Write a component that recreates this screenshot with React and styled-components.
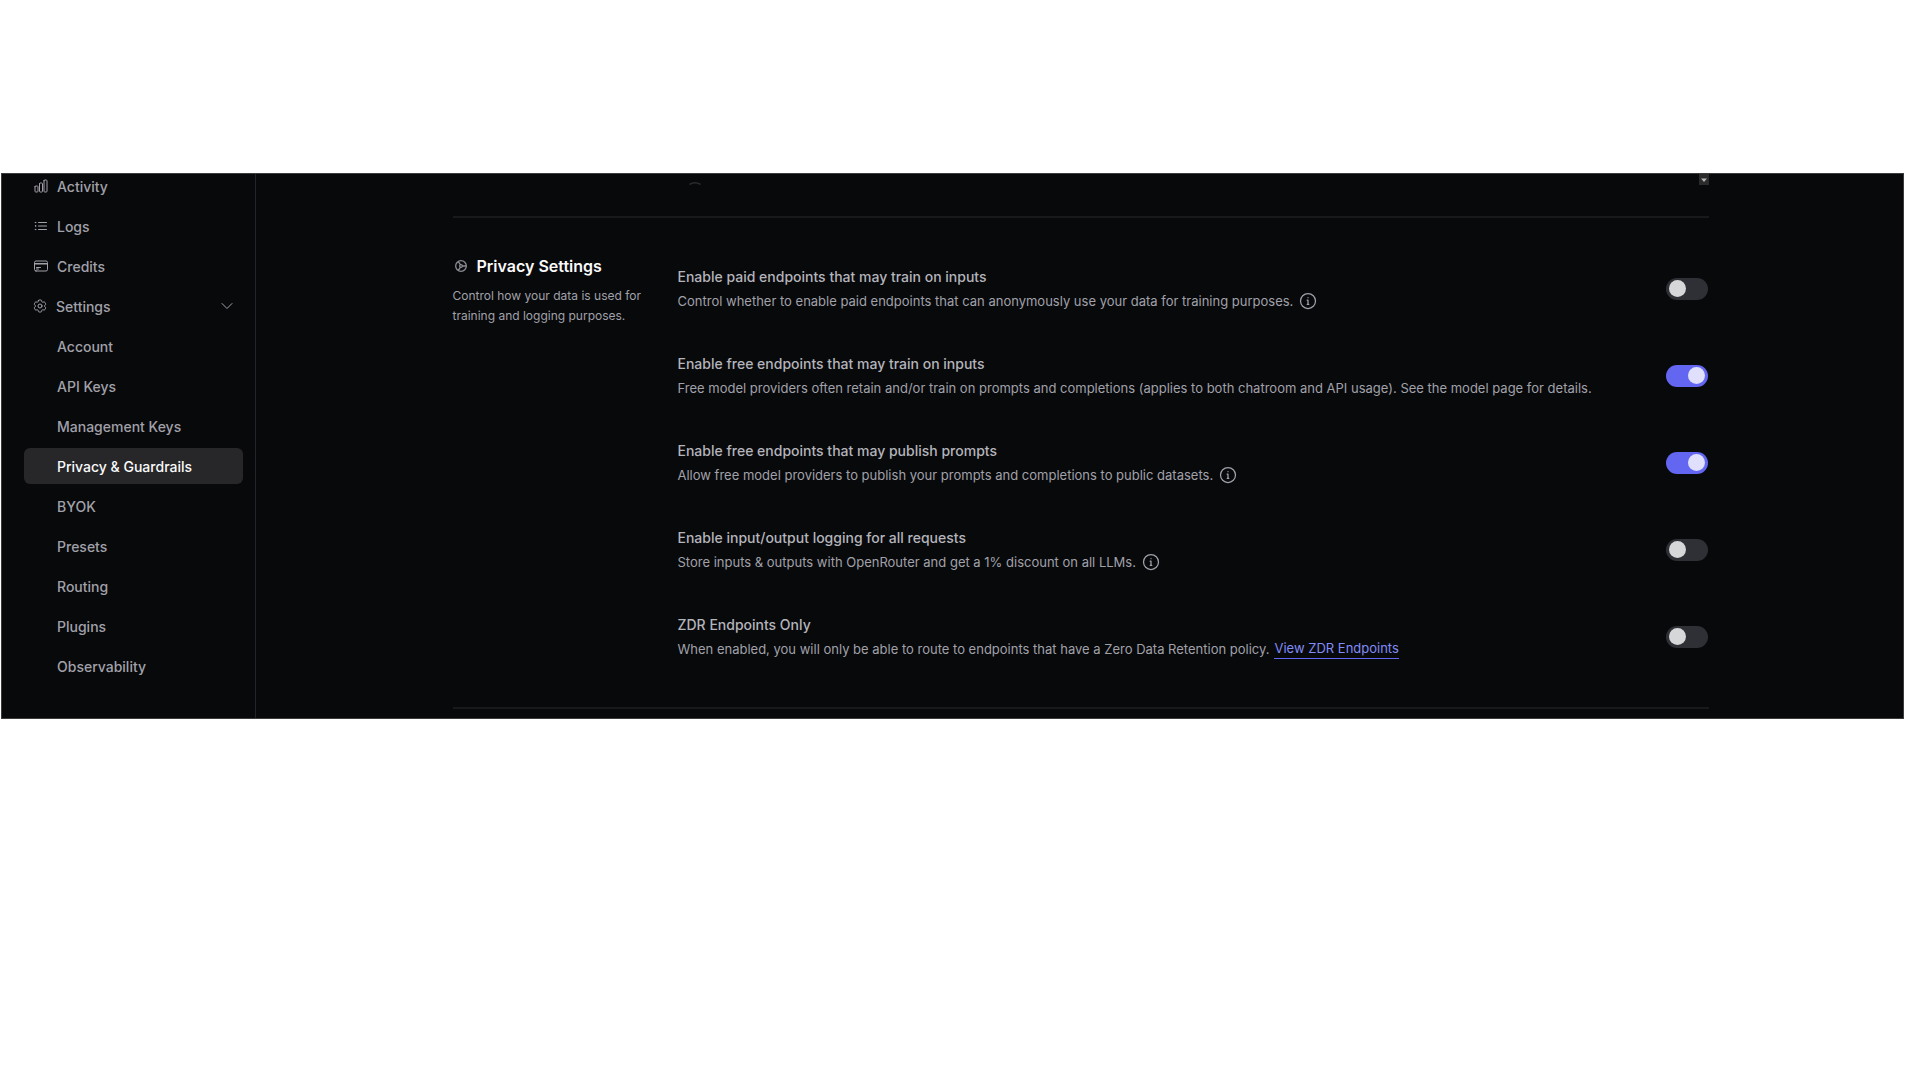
import React, { useState } from 'react'
import styled, { createGlobalStyle } from 'styled-components'

const mainLinks = [
  { label: 'Activity', icon: 'activity' },
  { label: 'Logs', icon: 'logs' },
  { label: 'Credits', icon: 'credits' },
]

const settingsLinks = [
  'Account',
  'API Keys',
  'Management Keys',
  'Privacy & Guardrails',
  'BYOK',
  'Presets',
  'Routing',
  'Plugins',
  'Observability',
]

const options = [
  {
    id: 'paid-train',
    title: 'Enable paid endpoints that may train on inputs',
    text: 'Control whether to enable paid endpoints that can anonymously use your data for training purposes.',
    info: true,
    on: false,
  },
  {
    id: 'free-train',
    title: 'Enable free endpoints that may train on inputs',
    text: 'Free model providers often retain and/or train on prompts and completions (applies to both chatroom and API usage). See the model page for details.',
    on: true,
  },
  {
    id: 'free-publish',
    title: 'Enable free endpoints that may publish prompts',
    text: 'Allow free model providers to publish your prompts and completions to public datasets.',
    info: true,
    on: true,
  },
  {
    id: 'io-logging',
    title: 'Enable input/output logging for all requests',
    text: 'Store inputs & outputs with OpenRouter and get a 1% discount on all LLMs.',
    info: true,
    on: false,
  },
  {
    id: 'zdr-only',
    title: 'ZDR Endpoints Only',
    text: 'When enabled, you will only be able to route to endpoints that have a Zero Data Retention policy.',
    link: 'View ZDR Endpoints',
    on: false,
  },
]

// heroicons outline shapes
const paths = {
  activity:
    'M3 13.125C3 12.504 3.504 12 4.125 12h2.25c.621 0 1.125.504 1.125 1.125v6.75C7.5 20.496 6.996 21 6.375 21h-2.25A1.125 1.125 0 0 1 3 19.875v-6.75ZM9.75 8.625c0-.621.504-1.125 1.125-1.125h2.25c.621 0 1.125.504 1.125 1.125v11.25c0 .621-.504 1.125-1.125 1.125h-2.25a1.125 1.125 0 0 1-1.125-1.125V8.625ZM16.5 4.125c0-.621.504-1.125 1.125-1.125h2.25C20.496 3 21 3.504 21 4.125v15.75c0 .621-.504 1.125-1.125 1.125h-2.25a1.125 1.125 0 0 1-1.125-1.125V4.125Z',
  logs: 'M8.25 6.75h12M8.25 12h12m-12 5.25h12M3.75 6.75h.007v.008H3.75V6.75Zm.375 0a.375.375 0 1 1-.75 0 .375.375 0 0 1 .75 0ZM3.75 12h.007v.008H3.75V12Zm.375 0a.375.375 0 1 1-.75 0 .375.375 0 0 1 .75 0Zm-.375 5.25h.007v.008H3.75v-.008Zm.375 0a.375.375 0 1 1-.75 0 .375.375 0 0 1 .75 0Z',
  credits:
    'M2.25 8.25h19.5M2.25 9h19.5m-16.5 5.25h6m-6 2.25h3m-3.75 3h15a2.25 2.25 0 0 0 2.25-2.25V6.75A2.25 2.25 0 0 0 19.5 4.5h-15a2.25 2.25 0 0 0-2.25 2.25v10.5A2.25 2.25 0 0 0 4.5 19.5Z',
  settings:
    'M9.594 3.94c.09-.542.56-.94 1.11-.94h2.593c.55 0 1.02.398 1.11.94l.213 1.281c.063.374.313.686.645.87.074.04.147.083.22.127.325.196.72.257 1.075.124l1.217-.456a1.125 1.125 0 0 1 1.37.49l1.296 2.247a1.125 1.125 0 0 1-.26 1.431l-1.003.827c-.293.241-.438.613-.43.992a7.723 7.723 0 0 1 0 .255c-.008.378.137.75.43.991l1.004.827c.424.35.534.955.26 1.43l-1.298 2.247a1.125 1.125 0 0 1-1.369.491l-1.217-.456c-.355-.133-.75-.072-1.076.124a6.47 6.47 0 0 1-.22.128c-.331.183-.581.495-.644.869l-.213 1.281c-.09.543-.56.94-1.11.94h-2.594c-.55 0-1.019-.398-1.11-.94l-.213-1.281c-.062-.374-.312-.686-.644-.87a6.52 6.52 0 0 1-.22-.127c-.325-.196-.72-.257-1.076-.124l-1.217.456a1.125 1.125 0 0 1-1.369-.49l-1.297-2.247a1.125 1.125 0 0 1 .26-1.431l1.004-.827c.292-.24.437-.613.43-.991a6.932 6.932 0 0 1 0-.255c.007-.38-.138-.751-.43-.992l-1.004-.827a1.125 1.125 0 0 1-.26-1.43l1.297-2.247a1.125 1.125 0 0 1 1.37-.491l1.216.456c.356.133.751.072 1.076-.124.072-.044.146-.086.22-.128.332-.183.582-.495.644-.869l.214-1.28ZM15 12a3 3 0 1 1-6 0 3 3 0 0 1 6 0Z',
  chevron: 'm19.5 8.25-7.5 7.5-7.5-7.5',
  wheel:
    'M20 12a8 8 0 1 1-16 0 8 8 0 0 1 16 0ZM14 12a2 2 0 1 1-4 0 2 2 0 0 1 4 0ZM14 12h6M11 10 8 5.500M11 14l-3 4.500',
  info: 'M21 12a9 9 0 1 1-18 0 9 9 0 0 1 18 0ZM11 11h1v5m-1 0h2M12 8h.01',
}

const Icon = ({ name, size = 16, stroke = 1.5 }) => (
  <Svg viewBox="0 0 24 24" width={size} height={size} strokeWidth={stroke} aria-hidden="true">
    <path d={paths[name]} />
  </Svg>
)

const App = () => {
  const [values, setValues] = useState(options.map((o) => o.on))

  const toggle = (index) => {
    setValues(values.map((v, i) => (i === index ? !v : v)))
  }

  return (
    <>
      <GlobalStyle />
      <Window>
        <Sidebar>
          {mainLinks.map((item) => (
            <NavLink href="#" key={item.label}>
              <Icon name={item.icon} />
              {item.label}
            </NavLink>
          ))}
          <NavGroup type="button">
            <Icon name="settings" />
            <span>Settings</span>
            <Icon name="chevron" />
          </NavGroup>
          {settingsLinks.map((label) => (
            <SubLink href="#" key={label} $active={label === 'Privacy & Guardrails'}>
              {label}
            </SubLink>
          ))}
        </Sidebar>
        <Main>
          <Content>
            <ListEnd>
              <svg width="12" height="3" viewBox="0 0 12 3" aria-hidden="true">
                <path d="M0.5 2.5Q6 -0.8 11.5 2.5" fill="none" stroke="#2c2d30" strokeWidth="1.5" />
              </svg>
              <ScrollButton type="button" aria-label="Scroll down">
                <svg width="6" height="4" viewBox="0 0 6 4">
                  <path d="M0 0.5h6L3 4Z" fill="#b5b5b5" />
                </svg>
              </ScrollButton>
            </ListEnd>
            <Section>
              <Intro>
                <Heading>
                  <Icon name="wheel" stroke={2} />
                  Privacy Settings
                </Heading>
                <Summary>Control how your data is used for training and logging purposes.</Summary>
              </Intro>
              <Options>
                {options.map((option, i) => (
                  <Option key={option.id}>
                    <div>
                      <Label htmlFor={option.id}>{option.title}</Label>
                      <Description>
                        {option.text}
                        {option.link && <TextLink href="#">{option.link}</TextLink>}
                        {option.info && (
                          <InfoButton type="button" aria-label="More information">
                            <Icon name="info" size={20} />
                          </InfoButton>
                        )}
                      </Description>
                    </div>
                    <Switch
                      type="checkbox"
                      role="switch"
                      id={option.id}
                      checked={values[i]}
                      onChange={() => toggle(i)}
                    />
                  </Option>
                ))}
              </Options>
            </Section>
          </Content>
        </Main>
      </Window>
    </>
  )
}

export default App

const GlobalStyle = createGlobalStyle`
  * {
    box-sizing: border-box;
  }
  body {
    margin: 0;
    background: #ffffff;
    font-family: Inter, 'Liberation Sans', sans-serif;
  }
  button {
    font: inherit;
    color: inherit;
    background: none;
    border: 0;
    padding: 0;
    cursor: pointer;
  }
`
const Svg = styled.svg`
  flex: none;
  fill: none;
  stroke: currentColor;
  stroke-linecap: round;
  stroke-linejoin: round;
`
const Window = styled.div`
  display: flex;
  margin: 173px 16px 0 1px;
  border: 1px solid #3c3c3c;
  background: #08090b;
  color: #a1a1aa;
  overflow: hidden;
`
const Sidebar = styled.nav`
  flex: none;
  width: 254px;
  display: flex;
  flex-direction: column;
  gap: 4px;
  margin-top: -6px;
  padding: 0 12px 34px 22px;
  border-right: 1px solid #232427;
`
const NavLink = styled.a`
  display: flex;
  align-items: center;
  gap: 8px;
  height: 36px;
  padding: 0 9px;
  border-radius: 6px;
  font-size: 14px;
  font-weight: 500;
  color: inherit;
  text-decoration: none;
`
const NavGroup = styled.button`
  display: flex;
  align-items: center;
  gap: 8px;
  height: 36px;
  padding: 0 8px;
  font-size: 14px;
  font-weight: 500;
  text-align: left;
  span {
    flex: 1;
  }
`
const SubLink = styled(NavLink)`
  padding: 0 33px;
  background: ${(props) => (props.$active ? '#27272a' : 'transparent')};
  color: ${(props) => (props.$active ? '#fafafa' : 'inherit')};
`
const Main = styled.main`
  flex: 1;
  min-width: 0;
  padding: 0 32px 0 34px;
`
const Content = styled.div`
  max-width: 1256px;
  margin: 0 auto;
`
const ListEnd = styled.div`
  display: flex;
  justify-content: space-between;
  align-items: flex-end;
  height: 11px;
  padding-left: 236px;
`
const ScrollButton = styled.button`
  display: flex;
  align-items: center;
  justify-content: center;
  width: 10px;
  height: 11px;
  background: #2b2b2b;
`
const Section = styled.section`
  display: grid;
  grid-template-columns: 193px 1fr;
  gap: 32px;
  margin: 31px 0 9px;
  padding: 33px 0 35px;
  border: solid #18191b;
  border-width: 2px 0;
`
const Intro = styled.div`
  display: flex;
  flex-direction: column;
  gap: 6px;
  padding-top: 1px;
`
const Heading = styled.h2`
  display: flex;
  align-items: center;
  gap: 8px;
  margin: 0;
  font-size: 16px;
  line-height: 28px;
  font-weight: 600;
  color: #fafafa;
  svg {
    color: #8b8b93;
  }
`
const Summary = styled.p`
  margin: 0;
  font-size: 12px;
  line-height: 20px;
`
const Options = styled.div`
  display: flex;
  flex-direction: column;
  gap: 16px;
  padding-top: 2px;
`
const Option = styled.div`
  display: flex;
  align-items: center;
  justify-content: space-between;
  height: 71px;
  padding-right: 1px;
`
const Label = styled.label`
  display: block;
  font-size: 14px;
  line-height: 24px;
  font-weight: 500;
  color: #b4b4bb;
`
const Description = styled.div`
  display: flex;
  align-items: center;
  gap: 5px;
  height: 24px;
  font-size: 13px;
`
const TextLink = styled.a`
  color: #818cf8;
  line-height: 19px;
  text-decoration: none;
  border-bottom: 1px solid #6366f1;
`
const InfoButton = styled.button`
  display: flex;
`
const Switch = styled.input`
  appearance: none;
  flex: none;
  display: flex;
  align-items: center;
  width: 42px;
  height: 22px;
  margin: 0;
  padding: 0 3px;
  border-radius: 11px;
  background: #2e3036;
  cursor: pointer;
  &::before {
    content: '';
    width: 17px;
    height: 17px;
    border-radius: 50%;
    background: #d6d7d9;
  }
  &:checked {
    justify-content: flex-end;
    background: #6366f1;
  }
  &:checked::before {
    background: #e0e0fc;
  }
`
